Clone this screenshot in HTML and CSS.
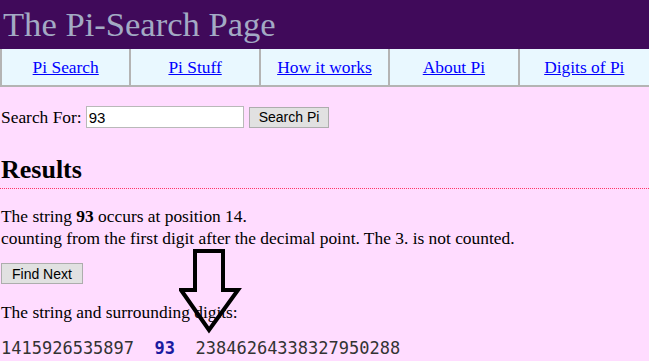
FILE: index.html
```html
<!DOCTYPE html>
<html lang="en">
<head>
    <meta charset="UTF-8">
    <title>The Pi-Search Page</title>
    <link rel="stylesheet" href="styles.css">
</head>
<body>
    <div class="header">
        <h1>The Pi-Search Page</h1>
    </div>

    <div class="nav">
        <a href="#search">Pi Search</a>
        <a href="#stuff">Pi Stuff</a>
        <a href="#how">How it works</a>
        <a href="#about">About Pi</a>
        <a href="#digits">Digits of Pi</a>
    </div>

    <form class="search-form">
        <label for="q">Search For:</label>
        <input type="text" id="q" value="93">
        <button type="button">Search Pi</button>
    </form>

    <h2 class="results">Results</h2>

    <div class="content">
        <p class="info">The string <b>93</b> occurs at position 14.<br>
        counting from the first digit after the decimal point. The 3. is not counted.</p>

        <button type="button" class="find-next">Find Next</button>

        <p class="surround">The string and surrounding digits:</p>

        <div class="digits">1415926535897  <span class="hit">93</span>  23846264338327950288</div>

        <!-- pointer to the match -->
        <svg class="arrow" width="64" height="86" viewBox="0 0 64 86">
            <path d="M16 2 H44 V41 H59 L30 81 L2 41 H16 Z" fill="none" stroke="#000" stroke-width="4" stroke-linejoin="miter"/>
        </svg>
    </div>
</body>
</html>
```

FILE: styles.css
```css
* {
    box-sizing: border-box;
}

body {
    margin: 0;
    background-color: #ffdcff;
    color: #000;
    font-family: 'Liberation Serif', 'Times New Roman', serif;
    font-size: 17.4px;
}

.header {
    background-color: #400a5a;
    height: 49px;
    padding: 4px 3px 0;
}

.header h1 {
    margin: 0;
    font-weight: normal;
    font-size: 34.6px;
    line-height: 40px;
    color: #a3aac4;
}

.nav {
    display: grid;
    grid-template-columns: repeat(5, 1fr);
    background-color: #e9f8ff;
    border-left: 2px solid #b4b4b4;
    border-bottom: 2px solid #b4b4b4;
    height: 38px;
}

.nav a {
    display: flex;
    align-items: center;
    justify-content: center;
    color: #0000ff;
    border-right: 2px solid #b4b4b4;
}

.nav a:last-child {
    border-right: none;
}

.search-form {
    display: flex;
    align-items: center;
    margin: 19px 0 0 1px;
    height: 22px;
}

.search-form label {
    margin-right: 4px;
}

.search-form input {
    width: 158px;
    height: 22px;
    margin: 0 5px 0 0;
    padding: 1px 2px;
    border: 1px solid #b9b9b9;
    background: #fff;
    font-family: 'Liberation Sans', Arial, sans-serif;
    font-size: 15px;
}

button {
    background-color: #e1e1e1;
    border: 1px solid #adadad;
    border-radius: 0;
    font-family: 'Liberation Sans', Arial, sans-serif;
    font-size: 14px;
    color: #000;
    height: 21px;
    padding: 0 9px;
}

.results {
    margin: 27px 0 0;
    padding: 0 1px 3px;
    font-size: 26px;
    line-height: 30px;
    border-bottom: 1px dotted #ff3366;
}

.content {
    position: relative;
    padding-left: 1px;
}

.info {
    margin: 16px 0 0;
    line-height: 22px;
}

.find-next {
    margin-top: 14px;
    height: 21px;
    padding: 0 10px;
}

.surround {
    margin: 17px 0 0;
    line-height: 22px;
}

.digits {
    margin-top: 14px;
    font-family: 'DejaVu Sans Mono', 'Liberation Mono', monospace;
    font-size: 17px;
    line-height: 22px;
    white-space: pre;
    color: #333;
}

.digits .hit {
    color: #1a1aa0;
    font-weight: bold;
}

.arrow {
    position: absolute;
    left: 179px;
    top: 44px;
}
```
